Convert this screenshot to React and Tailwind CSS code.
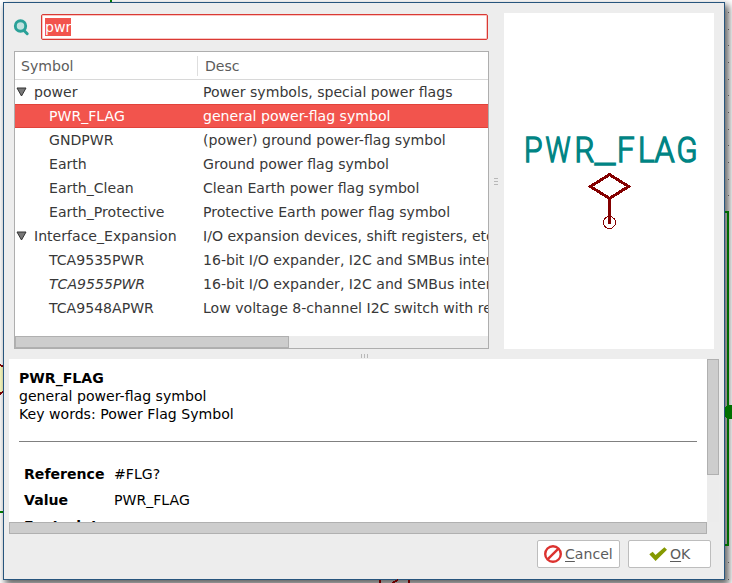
import React from "react";

const rows = [
  { name: "power", desc: "Power symbols, special power flags", group: true },
  { name: "PWR_FLAG", desc: "general power-flag symbol", selected: true },
  { name: "GNDPWR", desc: "(power) ground power-flag symbol" },
  { name: "Earth", desc: "Ground power flag symbol" },
  { name: "Earth_Clean", desc: "Clean Earth power flag symbol" },
  { name: "Earth_Protective", desc: "Protective Earth power flag symbol" },
  { name: "Interface_Expansion", desc: "I/O expansion devices, shift registers, etc", group: true },
  { name: "TCA9535PWR", desc: "16-bit I/O expander, I2C and SMBus inter" },
  { name: "TCA9555PWR", desc: "16-bit I/O expander, I2C and SMBus inter", italic: true },
  { name: "TCA9548APWR", desc: "Low voltage 8-channel I2C switch with re" },
];

const gridDots = [12, 29, 45, 62, 79, 95, 112, 129, 145, 162, 179, 195, 562, 579];

/* Label letters of the symbol: left edge and drawn width of each */
const label = [
  { c: "P", x: 525.5, w: 15.5 },
  { c: "W", x: 547, w: 22 },
  { c: "R", x: 576, w: 17 },
  { c: "_", x: 596.5, w: 17 },
  { c: "F", x: 618.5, w: 14.5 },
  { c: "L", x: 639.5, w: 13.5 },
  { c: "A", x: 656, w: 17 },
  { c: "G", x: 678, w: 18 },
];

/* Schematic canvas that shows around the dialog's edges */
function Canvas() {
  return (
    <svg className="absolute inset-0" width="732" height="583" shapeRendering="crispEdges">
      <rect x="110" y="0" width="2" height="3" fill="#008400" />
      <rect x="0" y="511" width="4" height="2" fill="#008400" />
      <path d="M0 366L4 368V391L0 393Z" fill="#ffffc2" />
      <path d="M0 365L4 367M0 394L4 391" stroke="#840000" strokeWidth="2" fill="none" />
    </svg>
  );
}

function CanvasOver() {
  return (
    <svg className="pointer-events-none absolute inset-0" width="732" height="583" shapeRendering="crispEdges">
      {gridDots.map((y) => (
        <rect key={y} x="728" y={y} width="1" height="1" fill="#555" />
      ))}
      <path d="M725 212H728V545H725" stroke="#006b00" strokeWidth="2" fill="none" />
      <path d="M725 407L727 405H731L732 406V418L731 419H727L725 417Z" fill="#007000" />
      <path d="M380 580V583M409 580V583" stroke="#660000" strokeWidth="2" />
      <path d="M392 583L398 580" stroke="#660000" strokeWidth="2" />
    </svg>
  );
}

function SearchIcon() {
  return (
    <svg className="-ml-px" width="17" height="17" viewBox="0 0 17 17">
      <path d="M10.5 11L14.2 14.7" stroke="#2aa198" strokeWidth="3" strokeLinecap="round" />
      <circle cx="7.500" cy="7" r="5.2" fill="#c0e2df" stroke="#2aa198" strokeWidth="2.900" />
    </svg>
  );
}

function SymbolTree() {
  return (
    <div className="flex h-[298px] w-[475px] flex-col overflow-hidden border border-[#aeaeae] bg-white">
      <div className="flex h-7 shrink-0 items-center border-b border-[#d8d8d8] text-[#5c5c5c]">
        <div className="flex h-5 w-[183px] items-center border-r border-[#dedede] pl-1.5">Symbol</div>
        <div className="pl-[7px]">Desc</div>
      </div>
      {rows.map((r) => (
        <div
          key={r.name}
          className={
            "flex h-6 shrink-0 items-center whitespace-nowrap " +
            (r.selected ? "border-y border-[#e0433b] bg-[#f2544d] text-white" : "text-[#383838]")
          }
        >
          <div className="flex w-[188px] shrink-0 items-center">
            {r.group ? (
              <>
                <svg className="ml-px mr-[7px]" width="11" height="10" viewBox="0 0 11 10">
                  <path d="M1 1H10L5.5 9Z" fill="#777" stroke="#333" />
                </svg>
                <span>{r.name}</span>
              </>
            ) : (
              <span className={r.italic ? "pl-[34px] italic" : "pl-[34px]"}>{r.name}</span>
            )}
          </div>
          <div>{r.desc}</div>
        </div>
      ))}
      <div className="mt-auto h-3 shrink-0 bg-[#ececec]">
        <div className="h-3 w-[274px] border border-[#b0b0b0] bg-[#cdcdcd]" />
      </div>
    </div>
  );
}

function Preview() {
  return (
    <div className="h-[336px] w-[210px] bg-white">
      <svg width="210" height="336" viewBox="504 13 210 336">
        <g
          fill="#008484"
          stroke="#008484"
          strokeWidth="1.5"
          fontFamily="Roboto, sans-serif"
          fontWeight="300"
          fontSize="35.5"
        >
          {label.map((l) => (
            <text
              key={l.x}
              x={l.x - 1.5}
              y={l.c === "_" ? 162.5 : 162}
              textLength={l.w + 3}
              lengthAdjust="spacingAndGlyphs"
            >
              {l.c}
            </text>
          ))}
        </g>
        <g fill="none" stroke="#840000" shapeRendering="crispEdges">
          <path d="M609.5 174.5L628.5 186.5L609.5 198.5L590.5 186.5Z" strokeWidth="3" />
          <path d="M609.5 198V223.500" strokeWidth="3" />
          <circle cx="609.5" cy="222.500" r="6" strokeWidth="1" />
        </g>
      </svg>
    </div>
  );
}

function Details() {
  return (
    <div className="ml-[5px] flex h-[175px] w-[710px] flex-col text-black">
      <div className="flex h-[163px]">
        <div className="h-[163px] w-[698px] overflow-hidden bg-white px-2.5 pt-2.5">
          <div className="leading-[18px]">
            <div className="font-bold">PWR_FLAG</div>
            <div>general power-flag symbol</div>
            <div>Key words: Power Flag Symbol</div>
          </div>
          <div className="mt-[18px] h-px bg-[#808080]" />
          <div className="mt-[19px] grid grid-cols-[90px_1fr] pl-[5px] leading-[26px]">
            <div className="font-bold">Reference</div>
            <div>#FLG?</div>
            <div className="font-bold">Value</div>
            <div>PWR_FLAG</div>
            <div className="font-bold">Footprint</div>
            <div />
          </div>
        </div>
        <div className="w-3 bg-[#ececec]">
          <div className="h-[116px] w-3 border border-[#b0b0b0] bg-[#cdcdcd]" />
        </div>
      </div>
      <div className="h-3 w-[698px] border border-[#b0b0b0] bg-[#cdcdcd]" />
    </div>
  );
}

function Buttons() {
  const base =
    "flex h-7 w-[83px] items-center rounded-[2px] border border-[#bdbdbd] bg-white text-[#5c5c5c]";
  return (
    <div className="mt-1.5 flex justify-end gap-2 pr-[13px]">
      <button className={base + " pl-1.5"}>
        <svg className="mr-[3px]" width="18" height="18" viewBox="0 0 18 18">
          <circle cx="9" cy="9" r="7.8" fill="none" stroke="#dc322f" strokeWidth="2.4" />
          <path d="M3.8 14.2L14.2 3.800" stroke="#dc322f" strokeWidth="2.4" />
        </svg>
        <span>
          <span className="underline decoration-1 underline-offset-2">C</span>ancel
        </span>
      </button>
      <button className={base + " pl-5"}>
        <svg className="mr-[3px]" width="18" height="18" viewBox="0 0 18 18">
          <path d="M0.3 9.3L3.7 6.700L6.500 10L15.400 2.300L18 4.800L6.600 16Z" fill="#859900" />
        </svg>
        <span>
          <span className="underline decoration-1 underline-offset-2">O</span>K
        </span>
      </button>
    </div>
  );
}

export default function App() {
  return (
    <div className="relative h-[583px] w-[732px] overflow-hidden bg-white font-['DejaVu_Sans',sans-serif] text-[14.08px] leading-[18px]">
      <Canvas />
      <div className="absolute left-[3px] top-[2px] flex h-[578px] w-[722px] flex-col border border-[#27557d] bg-[#ededed] shadow-[3px_4px_7px_1px_rgba(0,0,0,0.6)]">
        <div className="flex h-[356px] shrink-0">
          <div className="w-[485px] pl-2.5">
            <div className="mt-[11px] flex h-[26px] items-center">
              <div className="w-[27px] shrink-0">
                <SearchIcon />
              </div>
              <div className="flex h-[26px] w-[447px] items-center rounded-[2px] border border-[#d93a34] bg-white pl-[3px] shadow-[inset_0_0_0_1px_#fbc5c2]">
                <span className="h-[18px] bg-[#f2544d] text-white">pwr</span>
              </div>
            </div>
            <div className="mt-[11px]">
              <SymbolTree />
            </div>
          </div>
          <div className="flex w-[15px] flex-col items-center gap-0.5 pt-[175px] pr-0.5">
            <div className="h-px w-1 bg-[#b8b8b8]" />
            <div className="h-px w-1 bg-[#b8b8b8]" />
            <div className="h-px w-1 bg-[#b8b8b8]" />
          </div>
          <div className="pt-2.5">
            <Preview />
          </div>
        </div>
        <div className="-mt-[5px] flex h-[5px] shrink-0 justify-center gap-0.5">
          <div className="h-1 w-px bg-[#b8b8b8]" />
          <div className="h-1 w-px bg-[#b8b8b8]" />
          <div className="h-1 w-px bg-[#b8b8b8]" />
        </div>
        <Details />
        <Buttons />
      </div>
      <CanvasOver />
    </div>
  );
}
